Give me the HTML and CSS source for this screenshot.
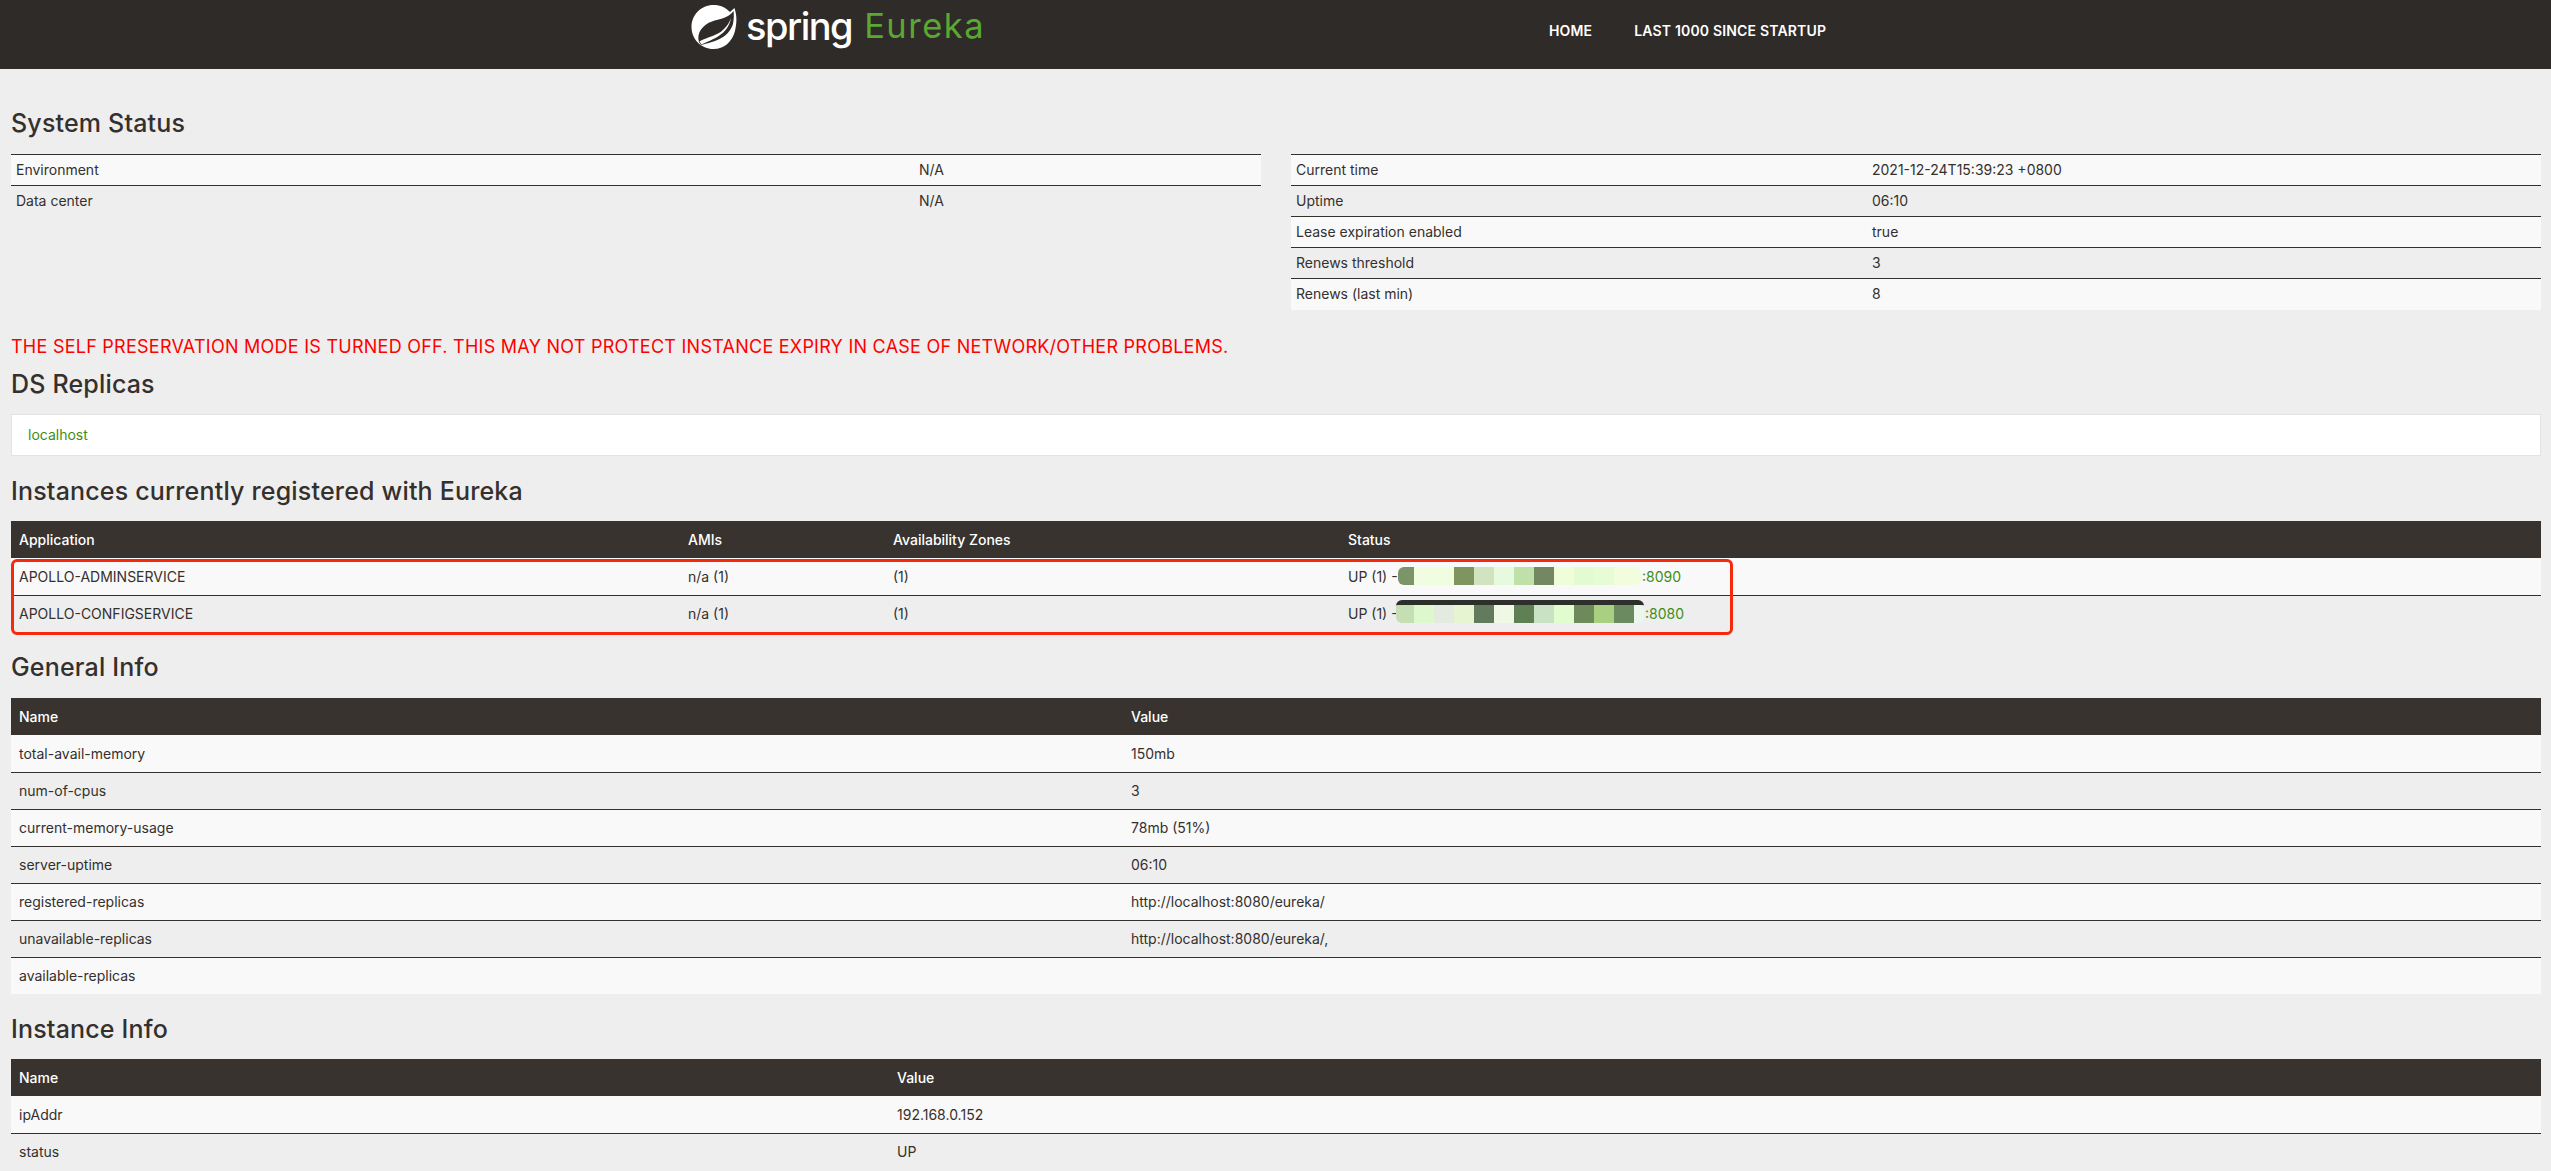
FILE: index.html
```html
<!DOCTYPE html>
<html>
<head>
    <title>Eureka</title>
    <link rel="stylesheet" href="styles.css">
</head>
<body>
    <nav class="navbar">
        <div class="brand">
            <svg class="leaf" viewBox="0 0 46 46" width="46" height="46">
                <path fill="#fff" d="M22.5 1c7 0 12 2.500 16.500 7L43.500 4C46 12 46 18 44 27 41 38 33 45 22.500 45 10 45 .5 35 .5 23 .5 11 10 1 22.500 1z"/>
                <path fill="#2f2b29" d="M42.500 7C38 14 28 15 21 17.500 12 20.500 5 29 8 38L10 41C22 38 37 35 42 20 43 15 43 10 42.500 7z"/>
                <path fill="#fff" d="M8.500 37.500C20 31 33 32 40 14 37 31 22 35 10.500 40.500z"/>
            </svg>
            <span class="brand-spring">spring</span>
            <span class="brand-eureka">Eureka</span>
        </div>
        <div class="nav-links">
            <a>HOME</a>
            <a>LAST 1000 SINCE STARTUP</a>
        </div>
    </nav>

    <div class="content">
        <h1 class="first">System Status</h1>
        <div class="status-columns">
            <table class="status">
                <tr><td class="env-name">Environment</td><td>N/A</td></tr>
                <tr><td>Data center</td><td>N/A</td></tr>
            </table>
            <table class="status status-right">
                <tr><td class="time-name">Current time</td><td>2021-12-24T15:39:23 +0800</td></tr>
                <tr><td>Uptime</td><td>06:10</td></tr>
                <tr><td>Lease expiration enabled</td><td>true</td></tr>
                <tr><td>Renews threshold</td><td>3</td></tr>
                <tr><td>Renews (last min)</td><td>8</td></tr>
            </table>
        </div>

        <h4 class="warning">THE SELF PRESERVATION MODE IS TURNED OFF. THIS MAY NOT PROTECT INSTANCE EXPIRY IN CASE OF NETWORK/OTHER PROBLEMS.</h4>

        <h1 class="replicas">DS Replicas</h1>
        <div class="well"><a>localhost</a></div>

        <h1>Instances currently registered with Eureka</h1>
        <div class="marked">
            <table class="grid">
                <tr><th class="col-app">Application</th><th class="col-ami">AMIs</th><th class="col-zone">Availability Zones</th><th>Status</th></tr>
                <tr>
                    <td>APOLLO-ADMINSERVICE</td><td>n/a (1)</td><td>(1)</td>
                    <td>
                        <div class="status-cell">
                            <span class="up">UP (1) -</span>
                            <span class="mosaic mosaic-a"><i></i><i></i><i></i><i></i><i></i><i></i><i></i><i></i><i></i><i></i><i></i><i></i></span>
                            <a>:8090</a>
                        </div>
                    </td>
                </tr>
                <tr>
                    <td>APOLLO-CONFIGSERVICE</td><td>n/a (1)</td><td>(1)</td>
                    <td>
                        <div class="status-cell">
                            <span class="up">UP (1) -</span>
                            <span class="mosaic mosaic-b"><i></i><i></i><i></i><i></i><i></i><i></i><i></i><i></i><i></i><i></i><i></i><i></i><i></i></span>
                            <a>:8080</a>
                        </div>
                    </td>
                </tr>
            </table>
            <div class="red-box"></div>
        </div>

        <h1 class="general">General Info</h1>
        <table class="grid">
            <tr><th class="col-general">Name</th><th>Value</th></tr>
            <tr><td>total-avail-memory</td><td>150mb</td></tr>
            <tr><td>num-of-cpus</td><td>3</td></tr>
            <tr><td>current-memory-usage</td><td>78mb (51%)</td></tr>
            <tr><td>server-uptime</td><td>06:10</td></tr>
            <tr><td>registered-replicas</td><td>http://localhost:8080/eureka/</td></tr>
            <tr><td>unavailable-replicas</td><td>http://localhost:8080/eureka/,</td></tr>
            <tr><td>available-replicas</td><td></td></tr>
        </table>

        <h1>Instance Info</h1>
        <table class="grid">
            <tr><th class="col-instance">Name</th><th>Value</th></tr>
            <tr><td>ipAddr</td><td>192.168.0.152</td></tr>
            <tr><td>status</td><td>UP</td></tr>
        </table>
    </div>
</body>
</html>
```

FILE: styles.css
```css
* {
    box-sizing: border-box;
}

html, body {
    margin: 0;
    background-color: #eeeeee;
}

body {
    font-family: Inter, "Noto Sans", Arial, sans-serif;
    font-size: 14px;
    color: #34302d;
}

a {
    color: #3e8e17;
}

/* top bar */
.navbar {
    height: 69px;
    background-color: #2f2b29;
    display: flex;
    padding-left: 691px;
}

.brand {
    width: 858px;
    display: flex;
    align-items: flex-start;
    padding-top: 4px;
}

.leaf {
    flex: none;
}

.brand-spring {
    margin-left: 9px;
    color: #fff;
    font-size: 38px;
    font-weight: 500;
    line-height: 44px;
    letter-spacing: -1.5px;
}

.brand-eureka {
    margin-left: 12px;
    color: #5aa832;
    font-size: 34.5px;
    line-height: 44px;
    letter-spacing: 1.5px;
}

.nav-links {
    display: flex;
    gap: 42px;
    padding-top: 20px;
}

.nav-links a {
    color: #fff;
    font-weight: 600;
    font-size: 14px;
    line-height: 22px;
    letter-spacing: .17px;
}

/* page */
.content {
    padding: 0 10px 0 11px;
}

h1 {
    margin: 20px 0 15px;
    font-size: 25px;
    font-weight: 500;
    line-height: 30px;
    letter-spacing: .18px;
}

h1.first {
    margin-top: 39px;
    margin-bottom: 16px;
}

h1.replicas {
    margin: 10px 0 15px;
}

h1.general {
    margin-bottom: 16px;
}

.warning {
    margin: 25px 0 0;
    color: #ff0000;
    font-size: 18px;
    font-weight: 400;
    line-height: 24px;
    letter-spacing: .25px;
}

.status-columns {
    display: flex;
    gap: 30px;
    align-items: flex-start;
    height: 156px;
}

table {
    width: 100%;
    border-collapse: collapse;
    table-layout: fixed;
}

.status {
    flex: 1;
}

.status td {
    height: 31px;
    padding: 0 5px 2px;
    border-top: 1px solid #34302d;
}

.status tr:nth-child(odd) {
    background-color: #f9f9f9;
}

.env-name {
    width: 903px;
}

.time-name {
    width: 576px;
}

.well {
    height: 42px;
    padding: 0 16px;
    line-height: 40px;
    background-color: #fff;
    border: 1px solid #e3e3e3;
}

.marked {
    position: relative;
}

.grid th {
    height: 37px;
    padding: 0 8px;
    background-color: #38332f;
    color: #fff;
    font-weight: 500;
    text-align: left;
}

.grid td {
    height: 37px;
    padding: 0 8px;
    border-top: 1px solid #34302d;
}

.grid tr:first-child + tr td {
    border-top: 0;
}

.grid tr:nth-child(even) {
    background-color: #f9f9f9;
}

.col-app {
    width: 669px;
}

.col-ami {
    width: 205px;
}

.col-zone {
    width: 455px;
}

.col-general {
    width: 1112px;
}

.col-instance {
    width: 878px;
}

/* status cell with the hidden host names */
.status-cell {
    display: flex;
    align-items: center;
}

.up {
    width: 50px;
    white-space: nowrap;
}

.mosaic {
    display: flex;
    height: 18px;
    border-radius: 6px;
    overflow: hidden;
}

.mosaic i {
    width: 20px;
}

.mosaic i:first-child {
    width: 16px;
}

.mosaic-a i:last-child {
    width: 27px;
}

.mosaic-a i:nth-child(1) { background: #7b9468; }
.mosaic-a i:nth-child(2) { background: #f0fde0; }
.mosaic-a i:nth-child(3) { background: #f0fde0; }
.mosaic-a i:nth-child(4) { background: #7e9560; }
.mosaic-a i:nth-child(5) { background: #d2e4bf; }
.mosaic-a i:nth-child(6) { background: #e6fbde; }
.mosaic-a i:nth-child(7) { background: #bfe0a8; }
.mosaic-a i:nth-child(8) { background: #748763; }
.mosaic-a i:nth-child(9) { background: #effdd8; }
.mosaic-a i:nth-child(10) { background: #e3fbd0; }
.mosaic-a i:nth-child(11) { background: #e6fcd4; }
.mosaic-a i:nth-child(12) { background: #f1fddc; }

.mosaic-b {
    height: 23px;
    margin: -4px 0 0 -2px;
    border-top: 5px solid #2c2f2a;
}

.mosaic-b i:first-child {
    width: 18px;
}

.mosaic-b i:last-child {
    width: 10px;
}

.mosaic-b i:nth-child(1) { background: #c5deb3; }
.mosaic-b i:nth-child(2) { background: #dcf8cc; }
.mosaic-b i:nth-child(3) { background: #e3ebe0; }
.mosaic-b i:nth-child(4) { background: #e6f4d2; }
.mosaic-b i:nth-child(5) { background: #647a5c; }
.mosaic-b i:nth-child(6) { background: #eff8e4; }
.mosaic-b i:nth-child(7) { background: #5f7f54; }
.mosaic-b i:nth-child(8) { background: #c9e2c4; }
.mosaic-b i:nth-child(9) { background: #e1fdd0; }
.mosaic-b i:nth-child(10) { background: #6f8a5a; }
.mosaic-b i:nth-child(11) { background: #a9cf80; }
.mosaic-b i:nth-child(12) { background: #6b8a60; }
.mosaic-b i:nth-child(13) { background: #eaf7ee; }

.status-cell a {
    margin-left: 1px;
}

.red-box {
    position: absolute;
    left: 0;
    top: 38px;
    width: 1722px;
    height: 76px;
    border: 3px solid #f5290b;
    border-radius: 6px;
}
```
